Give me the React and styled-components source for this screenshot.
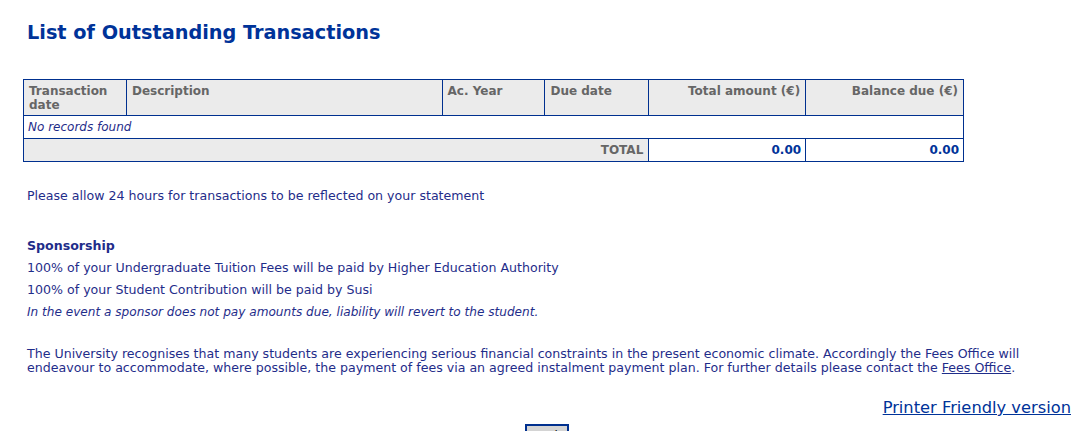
import styled, { createGlobalStyle } from 'styled-components';

const GlobalStyle = createGlobalStyle`
  body {
    margin: 0;
    background: #ffffff;
    font-family: "DejaVu Sans", Verdana, sans-serif;
    color: #1f2d8a;
    font-size: 12.6px;
  }
`;

const Page = styled.div`
  width: 1092px;
  height: 431px;
  overflow: hidden;
  padding: 0 0 0 27px;
  box-sizing: border-box;
`;

const Title = styled.h1`
  margin: 0;
  padding-top: 21px;
  font-size: 19.3px;
  font-weight: bold;
  color: #003399;
  line-height: 24px;
`;

const Table = styled.table`
  margin-top: 34px;
  margin-left: -4px;
  width: 941px;
  border-collapse: collapse;
  border: 1px solid #00308f;
  font-size: 12px;
`;

const HeadCell = styled.th`
  background: #ebebeb;
  color: #666666;
  font-weight: bold;
  text-align: ${(p) => (p.right ? 'right' : 'left')};
  vertical-align: top;
  border: 1px solid #00308f;
  padding: 4px 5px 3px 5px;
  line-height: 14px;
  height: 29px;
  width: ${(p) => p.w}px;
  box-sizing: border-box;
`;

const EmptyCell = styled.td`
  font-style: italic;
  color: #1f2d8a;
  padding: 4px 4px;
  height: 23px;
  box-sizing: border-box;
  border-bottom: 1px solid #00308f;
`;

const TotalLabel = styled.td`
  background: #ebebeb;
  color: #666666;
  font-weight: bold;
  text-align: right;
  padding: 3px 5px;
  height: 23px;
  box-sizing: border-box;
  border: 1px solid #00308f;
`;

const TotalValue = styled.td`
  background: #ffffff;
  color: #003399;
  font-weight: bold;
  text-align: right;
  padding: 3px 4px;
  border: 1px solid #00308f;
`;

const Note = styled.p`
  margin: 26px 0 0 0;
  line-height: 16px;
`;

const Sponsor = styled.div`
  margin-top: 31px;
  display: flex;
  flex-direction: column;
`;

const SponsorLine = styled.div`
  line-height: 22px;
  font-weight: ${(p) => (p.bold ? 'bold' : 'normal')};
  font-style: ${(p) => (p.italic ? 'italic' : 'normal')};
  font-size: ${(p) => (p.italic ? '12.1px' : 'inherit')};
`;

const Paragraph = styled.p`
  margin: 24px 0 0 0;
  line-height: 14px;
  width: 995px;
`;

const Link = styled.a`
  color: #1f2d8a;
  text-decoration: underline;
`;

const PrintRow = styled.div`
  display: flex;
  justify-content: flex-end;
  padding-right: 21px;
  margin-top: 23px;
`;

const PrintLink = styled.a`
  color: #003399;
  font-size: 16.3px;
  text-decoration: underline;
  line-height: 20px;
`;

const ButtonRow = styled.div`
  display: flex;
  padding-left: 498px;
  margin-top: 6px;
`;

const Button = styled.button`
  width: 44px;
  height: 24px;
  background: #d4d4d4;
  border: 2px solid #00308f;
  color: #000000;
  font-family: "DejaVu Sans", Verdana, sans-serif;
  font-size: 12px;
  padding: 0;
`;

export default function App() {
  return (
    <>
      <GlobalStyle />
      <Page>
        <Title>List of Outstanding Transactions</Title>
        <Table>
          <thead>
            <tr>
              <HeadCell w={103}>Transaction date</HeadCell>
              <HeadCell w={316}>Description</HeadCell>
              <HeadCell w={103}>Ac. Year</HeadCell>
              <HeadCell w={104}>Due date</HeadCell>
              <HeadCell w={157} right>Total amount (€)</HeadCell>
              <HeadCell w={158} right>Balance due (€)</HeadCell>
            </tr>
          </thead>
          <tbody>
            <tr>
              <EmptyCell colSpan={6}>No records found</EmptyCell>
            </tr>
            <tr>
              <TotalLabel colSpan={4}>TOTAL</TotalLabel>
              <TotalValue>0.00</TotalValue>
              <TotalValue>0.00</TotalValue>
            </tr>
          </tbody>
        </Table>
        <Note>Please allow 24 hours for transactions to be reflected on your statement</Note>
        <Sponsor>
          <SponsorLine bold>Sponsorship</SponsorLine>
          <SponsorLine>100% of your Undergraduate Tuition Fees will be paid by Higher Education Authority</SponsorLine>
          <SponsorLine>100% of your Student Contribution will be paid by Susi</SponsorLine>
          <SponsorLine italic>In the event a sponsor does not pay amounts due, liability will revert to the student.</SponsorLine>
        </Sponsor>
        <Paragraph>
          The University recognises that many students are experiencing serious financial constraints in the present economic climate. Accordingly the Fees Office will endeavour to accommodate, where possible, the payment of fees via an agreed instalment payment plan. For further details please contact the <Link href="#">Fees Office</Link>.
        </Paragraph>
        <PrintRow>
          <PrintLink href="#">Printer Friendly version</PrintLink>
        </PrintRow>
        <ButtonRow>
          <Button>Back</Button>
        </ButtonRow>
      </Page>
    </>
  );
}
